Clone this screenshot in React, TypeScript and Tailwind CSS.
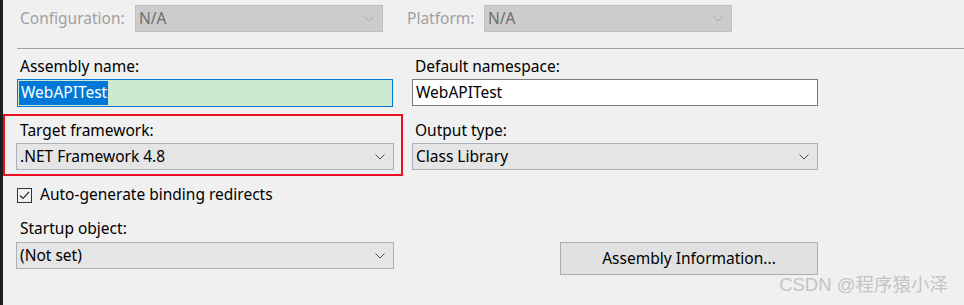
import React from 'react';

const font = { fontFamily: '"Noto Sans", "Open Sans", sans-serif' };

const Chevron: React.FC<{ className?: string }> = ({ className }) => (
    <svg width="10" height="6" viewBox="0 0 10 6" className={className}>
        <polyline points="0.5,0.5 5,5 9.5,0.5" fill="none" stroke="currentColor" strokeWidth="1" />
    </svg>
);

const Select: React.FC<{ value: string; className?: string }> = ({ value, className = '' }) => (
    <div
        className={`flex h-[27px] items-center justify-between border border-[#a9b2bb] bg-[#e5e5e5] pl-[3px] pr-[8px] text-[15.5px] text-black ${className}`}
    >
        <span>{value}</span>
        <Chevron className="text-[#505050]" />
    </div>
);

const DisabledSelect: React.FC<{ value: string }> = ({ value }) => (
    <div className="flex h-[27px] w-[248px] items-center justify-between border border-[#bfbfbf] bg-[#cccccc] pl-[3px] pr-[8px] text-[15.5px] text-[#6d6d6d]">
        <span>{value}</span>
        <Chevron className="text-[#a8a8a8]" />
    </div>
);

const Label: React.FC<{ children: React.ReactNode }> = ({ children }) => (
    <div className="h-[20px] pl-[3px] text-[15.5px] leading-[20px] text-black">{children}</div>
);

export default function App() {
    return (
        <div
            className="relative h-[305px] w-[964px] overflow-hidden border-l-[3px] border-[#1e1e1e] bg-[#f0f0f0]"
            style={font}
        >
            {/* Configuration / Platform */}
            <div className="mt-[5px] flex items-center pl-[14px]">
                <div className="w-[118px] pl-[3px] text-[15.5px] text-[#a0a0a0]">Configuration:</div>
                <DisabledSelect value="N/A" />
                <div className="ml-[24px] w-[77px] text-[15.5px] text-[#a0a0a0]">Platform:</div>
                <DisabledSelect value="N/A" />
            </div>

            <div className="ml-[14px] mt-[16px] h-px bg-[#a0a0a0]" />

            <div className="grid grid-cols-[376px_406px] gap-x-[19px] pl-[14px]">
                {/* Assembly name */}
                <div className="mt-[7px]">
                    <Label>Assembly name:</Label>
                    <div className="mt-[3px] flex h-[28px] items-center border border-[#0078d7] bg-[#cce8cf] p-px text-[15.5px]">
                        <span className="flex h-full items-center bg-[#0078d7] pl-[2px] pr-px text-white">WebAPITest</span>
                    </div>
                </div>
                <div className="mt-[7px]">
                    <Label>Default namespace:</Label>
                    <div className="mt-[3px] flex h-[27px] items-center border border-[#7a7a7a] bg-white pl-[3px] text-[15.5px] text-black">
                        WebAPITest
                    </div>
                </div>

                {/* Target framework */}
                <div className="relative mt-[13px]">
                    <div className="absolute -left-[14px] -top-[6px] h-[62px] w-[400px] border-2 border-[#e81123]" />
                    <Label>Target framework:</Label>
                    <Select value=".NET Framework 4.8" className="mt-[3px] -mx-px" />
                </div>
                <div className="mt-[13px]">
                    <Label>Output type:</Label>
                    <Select value="Class Library" className="mt-[3px]" />
                </div>

                {/* Checkbox */}
                <div className="col-span-2 mt-[15px] flex h-[20px] items-center">
                    <div className="flex h-[15px] w-[15px] items-center justify-center border border-[#333333] bg-[#f0f0f0]">
                        <svg width="11" height="9" viewBox="0 0 11 9">
                            <polyline points="1,4.5 4,7.5 10,1" fill="none" stroke="#333333" strokeWidth="1.2" />
                        </svg>
                    </div>
                    <span className="ml-[8px] text-[15.5px] text-black">Auto-generate binding redirects</span>
                </div>

                {/* Startup object */}
                <div className="mt-[13px]">
                    <Label>Startup object:</Label>
                    <Select value="(Not set)" className="mt-[4px] -mx-px" />
                </div>
                <div className="mt-[13px] flex flex-col items-end pt-[24px]">
                    <button className="h-[33px] w-[258px] border border-[#adadad] bg-[#e1e1e1] text-[15.5px] text-black">
                        Assembly Information...
                    </button>
                </div>
            </div>

            {/* watermark */}
            <div
                className="absolute bottom-[6px] right-[16px] text-[18.5px] text-[#c4c4c4]"
                style={{ fontFamily: '"Liberation Sans", "Noto Sans CJK SC", sans-serif' }}
            >
                CSDN @程序猿小泽
            </div>
        </div>
    );
}
